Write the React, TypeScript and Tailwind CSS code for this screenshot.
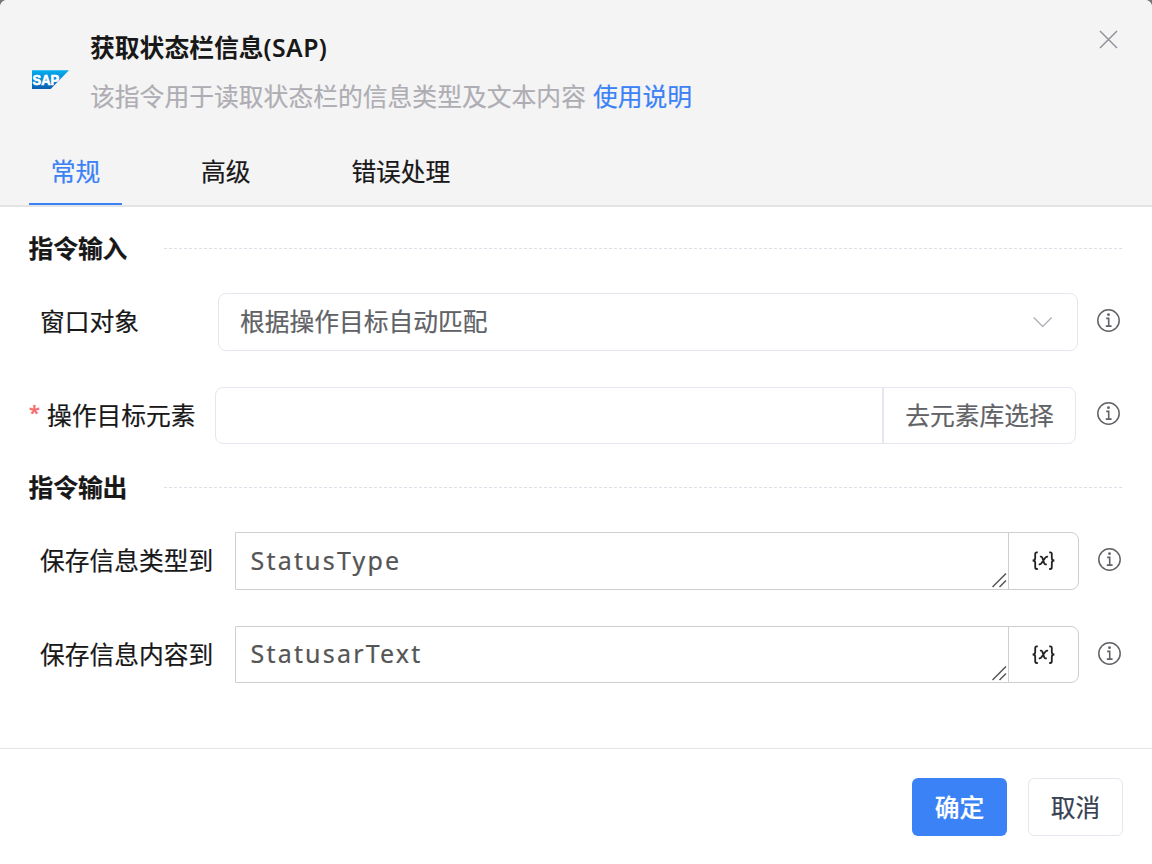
import React from "react";

function InfoIcon() {
  return (
    <svg width="23" height="23" viewBox="0 0 23 23" fill="none" stroke="#606266" className="shrink-0">
      <circle cx="11.5" cy="11.5" r="10.7" strokeWidth="1.5" />
      <circle cx="11.5" cy="5.7" r="1.4" fill="#606266" stroke="none" />
      <path d="M9.2 9.4h2.5v7.6M8.8 17.1h5.8" strokeWidth="1.6" />
    </svg>
  );
}

function SapLogo() {
  return (
    <svg width="38" height="20" viewBox="0 0 38 20" className="shrink-0">
      <defs>
        <linearGradient id="sap" x1="0" y1="0" x2="0" y2="1">
          <stop offset="0" stopColor="#00aeef" />
          <stop offset="0.5" stopColor="#0a86d4" />
          <stop offset="1" stopColor="#0a5cb0" />
        </linearGradient>
      </defs>
      <path d="M0 0.2h37L18.7 19H0z" fill="url(#sap)" />
      <text
        x="0.6"
        y="15"
        textLength="26.6"
        lengthAdjust="spacingAndGlyphs"
        fill="#fff"
        stroke="#fff"
        strokeWidth="0.7"
        fontSize="15.5"
        fontWeight="700"
        fontFamily="Liberation Sans, sans-serif"
      >
        SAP
      </text>
    </svg>
  );
}

function SectionTitle({ children }: { children: React.ReactNode }) {
  return (
    <div className="-mr-px flex h-8 items-center">
      <h2 className="-ml-[0.5px] w-[135.5px] text-[24.8px] leading-8 font-bold tracking-[-0.1px] whitespace-nowrap">{children}</h2>
      <div className="h-px flex-1 bg-[repeating-linear-gradient(90deg,#dcdfe6_0_3px,transparent_3px_5px)]" />
    </div>
  );
}

function VariableField({ value }: { value: string }) {
  return (
    <div className="flex h-full w-[844px] rounded-r-lg border border-[#cfcfcf]">
      <div className="relative flex flex-1 items-center pb-[3px] pl-[14.5px] text-[25px] leading-9 tracking-[2.2px] text-[#555]">
        <span>{value}</span>
        <svg width="15" height="15" viewBox="0 0 15 15" className="absolute right-[1px] bottom-[1px]" stroke="#555" strokeWidth="1.5">
          <path d="M0.5 14L14 0.5M7.5 14L14 7.5" />
        </svg>
      </div>
      <div className="flex w-[70px] items-center justify-center border-l border-[#cfcfcf]">
        <svg width="24" height="20" viewBox="0 0 24 20" fill="none" stroke="#222" strokeWidth="1.8">
          <path d="M5.8 1.3H4.8Q3.2 1.3 3.2 3V7.3Q3.2 9.5 0.6 9.5Q3.2 9.5 3.2 11.8V16.3Q3.2 18 4.8 18H5.8" />
          <path d="M17.2 1.3H18.2Q19.8 1.3 19.8 3V7.3Q19.8 9.5 22.4 9.5Q19.8 9.5 19.8 11.8V16.3Q19.8 18 18.2 18H17.2" />
          <path d="M8 5.8Q9.8 5 10.5 7.1L12 11.8Q12.7 14 14.7 13.2M16 5.8Q14.2 5.3 13.1 7.1L9.6 12Q8.5 13.8 6.8 13.2" />
        </svg>
      </div>
    </div>
  );
}

export default function App() {
  return (
    <div className="h-[864px] w-[1152px] overflow-hidden bg-[#777]">
      <div className="flex h-full flex-col rounded-t-[7px] bg-white font-['Noto_Sans','Noto_Sans_CJK_SC',sans-serif] text-[24.75px] text-[#181818] [-webkit-text-stroke:0.2px]">
        <header className="flex h-[207px] flex-col rounded-t-[7px] border-b-2 border-[#e4e4e4] bg-[#f4f4f4]">
          <div className="flex h-[138px] pl-8">
            <div className="w-[58px] pt-[70px]">
              <SapLogo />
            </div>
            <div className="flex-1 pt-[29px]">
              <h1 className="text-[24.8px] leading-9 font-bold [-webkit-text-stroke:0px]">
                获取状态栏信息<span className="inline-block tracking-[0.4px] font-semibold">(SAP)</span>
              </h1>
              <p className="mt-[13px] text-[24.8px] leading-9 text-[#aeadb3]">
                该指令用于读取状态栏的信息类型及文本内容
                <a className="ml-[7px] text-[#3b82f6]">使用说明</a>
              </p>
            </div>
            <button className="h-5 w-[53px] pt-[30px]">
              <svg width="19" height="19" viewBox="0 0 19 19" fill="none" stroke="#909399" strokeWidth="1.5">
                <path d="M1 1l17 17M18 1L1 18" />
              </svg>
            </button>
          </div>
          <nav className="flex h-[67px] pl-[29px] text-[24.8px] tracking-[-0.1px]">
            <div className="flex w-[93px] justify-center border-b-2 border-[#3b82f6] pt-[15px] leading-9 text-[#3b82f6]">常规</div>
            <div className="ml-[79px] pt-[15px] leading-9">高级</div>
            <div className="ml-[101px] pt-[15px] leading-9">错误处理</div>
          </nav>
        </header>
        <main className="flex flex-1 flex-col px-[29px] pt-[25px]">
          <SectionTitle>指令输入</SectionTitle>
          <div className="mt-[29px] flex h-[58px] items-center">
            <label className="w-[189px] pl-[11px]">窗口对象</label>
            <div className="flex h-full w-[860px] items-center justify-between rounded-lg border border-[#e4e7ed] pr-6 pl-[21px] text-[#606266]">
              <span>根据操作目标自动匹配</span>
              <svg width="20" height="11" viewBox="0 0 20 11" fill="none" stroke="#b0b3b9" strokeWidth="1.4">
                <path d="M0.7 0.5l9 9 9-9" />
              </svg>
            </div>
            <div className="-mt-[3px] ml-[19px]">
              <InfoIcon />
            </div>
          </div>
          <div className="mt-9 flex h-[57px] items-center">
            <label className="flex w-[186px] items-center whitespace-nowrap">
              <span className="w-[18px] pb-[5px] text-[20px] font-semibold text-[#f56c6c]">*</span>操作目标元素
            </label>
            <div className="flex h-full w-[861px] rounded-lg border border-[#e4e7ed]">
              <div className="flex-1" />
              <button className="flex w-[193px] items-center justify-center border-l-2 border-[#e4e7ed] text-[#606266]">去元素库选择</button>
            </div>
            <div className="-mt-[4px] ml-[21px]">
              <InfoIcon />
            </div>
          </div>
          <div className="mt-[27px]">
            <SectionTitle>指令输出</SectionTitle>
          </div>
          <div className="mt-[29px] flex h-[58px] items-center">
            <label className="w-[206px] pl-[11px] whitespace-nowrap">保存信息类型到</label>
            <VariableField value="StatusType" />
            <div className="-mt-[3px] ml-[19px]">
              <InfoIcon />
            </div>
          </div>
          <div className="mt-9 flex h-[57px] items-center">
            <label className="w-[206px] pl-[11px] whitespace-nowrap">保存信息内容到</label>
            <VariableField value="StatusarText" />
            <div className="-mt-[2px] ml-[19px]">
              <InfoIcon />
            </div>
          </div>
        </main>
        <footer className="flex h-[116px] justify-end gap-[21px] border-t border-[#e4e5e7] pt-[29px] pr-[29px]">
          <button className="h-[58px] w-[95px] rounded-md bg-[#3b82f6] pt-px font-medium text-white">确定</button>
          <button className="h-[58px] w-[95px] rounded-md border border-[#e4e7ed] pt-px text-[#374151]">取消</button>
        </footer>
      </div>
    </div>
  );
}
